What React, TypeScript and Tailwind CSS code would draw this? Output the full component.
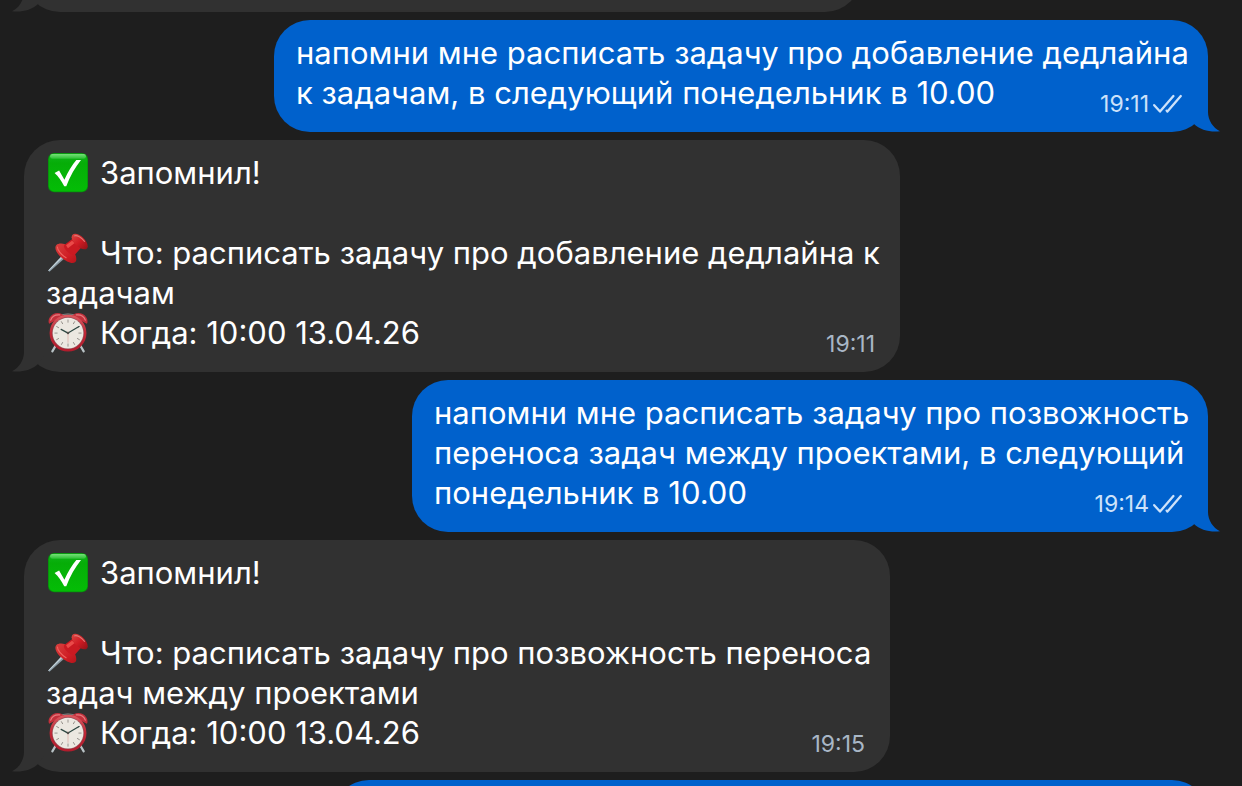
import type { ReactNode } from 'react'

type EmojiName = 'check' | 'pin' | 'clock'

interface Line {
  emoji?: EmojiName
  text: string
}

interface Message {
  own: boolean
  time: string
  width: string
  lines: Line[]
}

const messages: Message[] = [
  {
    own: true,
    time: '19:11',
    width: 'w-[934px]',
    lines: [
      { text: 'напомни мне расписать задачу про добавление дедлайна' },
      { text: 'к задачам, в следующий понедельник в 10.00' },
    ],
  },
  {
    own: false,
    time: '19:11',
    width: 'w-[876px]',
    lines: [
      { emoji: 'check', text: 'Запомнил!' },
      { text: '' },
      { emoji: 'pin', text: 'Что: расписать задачу про добавление дедлайна к' },
      { text: 'задачам' },
      { emoji: 'clock', text: 'Когда: 10:00 13.04.26' },
    ],
  },
  {
    own: true,
    time: '19:14',
    width: 'w-[796px]',
    lines: [
      { text: 'напомни мне расписать задачу про позвожность' },
      { text: 'переноса задач между проектами, в следующий' },
      { text: 'понедельник в 10.00' },
    ],
  },
  {
    own: false,
    time: '19:15',
    width: 'w-[866px]',
    lines: [
      { emoji: 'check', text: 'Запомнил!' },
      { text: '' },
      { emoji: 'pin', text: 'Что: расписать задачу про позвожность переноса' },
      { text: 'задач между проектами' },
      { emoji: 'clock', text: 'Когда: 10:00 13.04.26' },
    ],
  },
]

function CheckEmoji() {
  return (
    <svg viewBox="0 0 40 40" className="size-[41px]" role="img" aria-label="Готово">
      <defs>
        <linearGradient id="check-body" x1="0" y1="0" x2="0" y2="1">
          <stop offset="0" stopColor="#10b51c" />
          <stop offset="0.25" stopColor="#06ad08" />
          <stop offset="1" stopColor="#04bd06" />
        </linearGradient>
        <linearGradient id="check-shine" x1="0" y1="0" x2="0" y2="1">
          <stop offset="0" stopColor="#74e276" />
          <stop offset="1" stopColor="#2cbf35" />
        </linearGradient>
      </defs>
      <rect x="1" y="0" width="39" height="38.4" rx="6" fill="#078d0c" />
      <rect x="1.7" y="0.7" width="37.6" height="36.8" rx="5.4" fill="url(#check-body)" />
      <rect x="3" y="1" width="35" height="4.6" rx="2.3" fill="url(#check-shine)" />
      <path d="M7.4 19.4 11.8 17 17 26.2C20.4 18 24.6 11.8 28.6 6.8H33.2C27.6 14 22.4 22.6 18.8 32.4H16.8C14.2 27.2 11.2 22.8 7.4 19.4Z" fill="#fff" />
    </svg>
  )
}

function PinEmoji() {
  return (
    <svg viewBox="0 0 40 40" className="size-[41px]" role="img" aria-label="Булавка">
      <defs>
        <linearGradient id="pin-cap" x1="0" y1="0" x2="1" y2="1">
          <stop offset="0" stopColor="#dc4a45" />
          <stop offset="0.5" stopColor="#d11c24" />
          <stop offset="1" stopColor="#8e1218" />
        </linearGradient>
        <linearGradient id="pin-base" x1="0" y1="0" x2="1" y2="1">
          <stop offset="0" stopColor="#d8413f" />
          <stop offset="0.6" stopColor="#cf1f26" />
          <stop offset="1" stopColor="#b3141a" />
        </linearGradient>
      </defs>
      <path d="M16.6 20.2 19.4 22.8 2.4 37.7 1.2 36.6Z" fill="#8a9aa3" />
      <path d="M16.6 20.2 17.8 21.4 1.8 37.1 1.2 36.6Z" fill="#c3d2da" />
      <path d="M9.2 11.8C6.6 14.4 9.2 20 14 24 18.8 28 25 31 27.6 28.4 29.4 26.6 28.6 22.4 26.6 19.2L17.6 11C14 9.8 10.6 10.4 9.2 11.8Z" fill="url(#pin-base)" />
      <path d="M17.2 11.4 24.2 6.2 33.2 14.4 27.4 21C25.6 23.8 13.6 14.8 17.2 11.4Z" fill="#ca1a22" />
      <path d="M18.6 12 24.4 7.6 27 9.8 20.4 14.8Z" fill="#ea4b49" />
      <path d="M25.2 1.4C22.4 4.2 25 8.6 28.6 12 32.2 15.4 36.8 17.2 39 15 41 12.8 38.8 8 35.2 4.6 31.6 1.2 27.2-0.4 25.2 1.4Z" fill="url(#pin-cap)" />
      <path d="M26.8 2.8C29.2 1.8 33.8 4.4 36.6 8.2" fill="none" stroke="#e07a75" strokeWidth="1" strokeLinecap="round" />
      <path d="M10.2 13.6C10 16.6 14 21.4 18.6 24.2" fill="none" stroke="#f0625e" strokeWidth="1.1" strokeLinecap="round" />
    </svg>
  )
}

function ClockEmoji() {
  return (
    <svg viewBox="0 0 40 40" className="size-[41px]" role="img" aria-label="Будильник">
      <defs>
        <linearGradient id="clock-rim" x1="0" y1="0" x2="0" y2="1">
          <stop offset="0" stopColor="#dc5a60" />
          <stop offset="0.5" stopColor="#bd2735" />
          <stop offset="1" stopColor="#b01c2c" />
        </linearGradient>
      </defs>
      <path d="M8.4 32 5.2 37.4M32.6 32 35.8 37.4" stroke="#b9c3c6" strokeWidth="2.2" strokeLinecap="round" />
      <path d="M13.5 2.4C15.5 0.4 25.5 0.4 27.5 2.4" fill="none" stroke="#8f8f8f" strokeWidth="1" />
      <path d="M2 10.6C0 6 4.4 0 10.4 0.1 13.4 0.2 15.8 1.4 16.8 3.2Z" fill="#c2303b" />
      <path d="M39 10.6C41 6 36.6 0 30.6 0.1 27.6 0.2 25.2 1.4 24.2 3.2Z" fill="#c2303b" />
      <path d="M3.6 7C4.8 3.4 8.6 1.6 12.4 1.9M37.4 7C36.2 3.4 32.4 1.6 28.6 1.9" fill="none" stroke="#e67b7e" strokeWidth="1.2" strokeLinecap="round" />
      <circle cx="20.5" cy="19.6" r="18" fill="url(#clock-rim)" />
      <circle cx="20.5" cy="19.6" r="15.6" fill="#98515a" />
      <circle cx="20.5" cy="19.6" r="15" fill="#ece8e1" />
      <g stroke="#8b8680" strokeWidth="0.8">
        {Array.from({ length: 12 }).map((_, i) => (
          <path key={i} d="M20.5 6.4V9.4" transform={`rotate(${i * 30} 20.5 19.6)`} />
        ))}
      </g>
      <path d="M20.5 19.6 13.8 16M20.5 19.6 31.2 13.2" stroke="#2d4742" strokeWidth="1.2" strokeLinecap="round" />
      <path d="M20.5 18V29" stroke="#d9a29a" strokeWidth="0.6" />
      <circle cx="20.5" cy="19.6" r="1.2" fill="#54524e" />
    </svg>
  )
}

const emojis: Record<EmojiName, ReactNode> = {
  check: <CheckEmoji />,
  pin: <PinEmoji />,
  clock: <ClockEmoji />,
}

function Tail({ own }: { own: boolean }) {
  return (
    <svg
      viewBox="0 0 32 36"
      className={`absolute bottom-0 w-8 h-9 ${own ? '-right-3 text-[#0061cc]' : '-left-3 -scale-x-100 text-[#313131]'}`}
      aria-hidden="true"
    >
      <path d="M20 0V16C20 24 25 32 32 35.2C23 36.6 12 34 6 28L0 20V0Z" fill="currentColor" />
    </svg>
  )
}

function ReadTicks() {
  return (
    <svg viewBox="0 0 30 22" className="w-[30px] h-[22px]" fill="none" stroke="currentColor" strokeWidth="2.3" strokeLinecap="round" strokeLinejoin="round" role="img" aria-label="Прочитано">
      <path d="M1.2 12.2 7 18.6 20.4 3" />
      <path d="M13.6 17.6 14.4 18.6 27.8 3" />
    </svg>
  )
}

function Bubble({ own, className, children }: { own: boolean; className: string; children?: ReactNode }) {
  return (
    <div className={`relative shrink-0 max-w-full rounded-[36px] ${own ? 'self-end bg-[#0061cc]' : 'self-start bg-[#313131]'} ${className}`}>
      <Tail own={own} />
      {children}
    </div>
  )
}

function MessageBubble({ message }: { message: Message }) {
  const { own, time, width, lines } = message
  return (
    <Bubble own={own} className={`${width} pl-[22px] pr-[25px] pt-[13px] pb-[17px]`}>
      {lines.map((line, i) => (
        <div key={i} className="flex justify-between">
          <p className="flex h-10 gap-3 whitespace-nowrap text-[31px] leading-10 text-white">
            {line.emoji && <span className="shrink-0 pl-px">{emojis[line.emoji]}</span>}
            {line.text}
          </p>
          {i === lines.length - 1 && (
            <div className={`mt-5 flex gap-1 text-[23px] leading-[22px] ${own ? 'text-[#cde2fa]' : 'text-[#a9b7c6]'}`}>
              <time>{time}</time>
              {own && <ReadTicks />}
            </div>
          )}
        </div>
      ))}
    </Bubble>
  )
}

export default function App() {
  return (
    <main className="flex h-screen flex-col gap-2 overflow-hidden bg-[#1e1e1e] font-[Inter,sans-serif]">
      <div className="flex h-3 shrink-0 flex-col justify-end overflow-hidden pl-6">
        <Bubble own={false} className="w-[837px] h-20" />
      </div>
      <div className="flex flex-col gap-2 pl-6 pr-[34px]">
        {messages.map((message, i) => (
          <MessageBubble key={i} message={message} />
        ))}
      </div>
      <div className="flex min-h-0 flex-1 flex-col overflow-hidden pr-[34px]">
        <Bubble own className="w-[875px] h-20" />
      </div>
    </main>
  )
}
